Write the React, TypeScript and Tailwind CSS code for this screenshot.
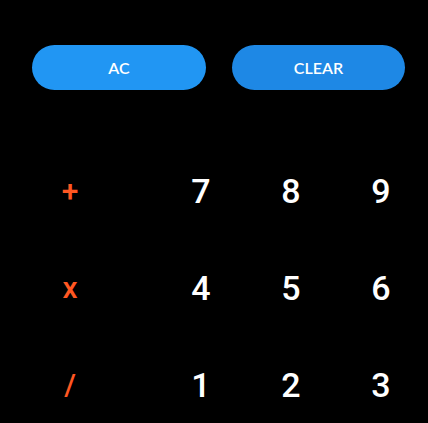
const rows = [
  { op: '+', digits: ['7', '8', '9'] },
  { op: 'x', digits: ['4', '5', '6'] },
  { op: '/', digits: ['1', '2', '3'] },
];

export default function App() {
  return (
    <div className="h-[423px] w-[428px] overflow-hidden bg-black" style={{ fontFamily: 'Roboto, "Noto Sans", sans-serif' }}>
      <div className="flex gap-[26px] pl-[32px] pt-[45px]">
        <button
          className="flex h-[45px] w-[174px] items-center justify-center rounded-full bg-[#2196f3] text-[16px] font-semibold text-white"
          style={{ fontFamily: 'Lato, "Open Sans", sans-serif' }}
        >
          AC
        </button>
        <button
          className="flex h-[45px] w-[173px] items-center justify-center rounded-full bg-[#1e88e5] text-[16px] font-semibold text-white"
          style={{ fontFamily: 'Lato, "Open Sans", sans-serif' }}
        >
          CLEAR
        </button>
      </div>

      <div className="mt-[52px] flex flex-col">
        {rows.map((row, i) => (
          <div key={i} className="flex h-[97px] items-center">
            <div className="flex w-[140px] justify-center text-[30px] font-medium leading-none text-[#ff5722]">{row.op}</div>
            <div className="w-[16px]" />
            {row.digits.map((d) => (
              <div key={d} className="flex w-[90px] justify-center text-[34px] font-medium leading-none text-white">
                {d}
              </div>
            ))}
          </div>
        ))}
      </div>
    </div>
  );
}
